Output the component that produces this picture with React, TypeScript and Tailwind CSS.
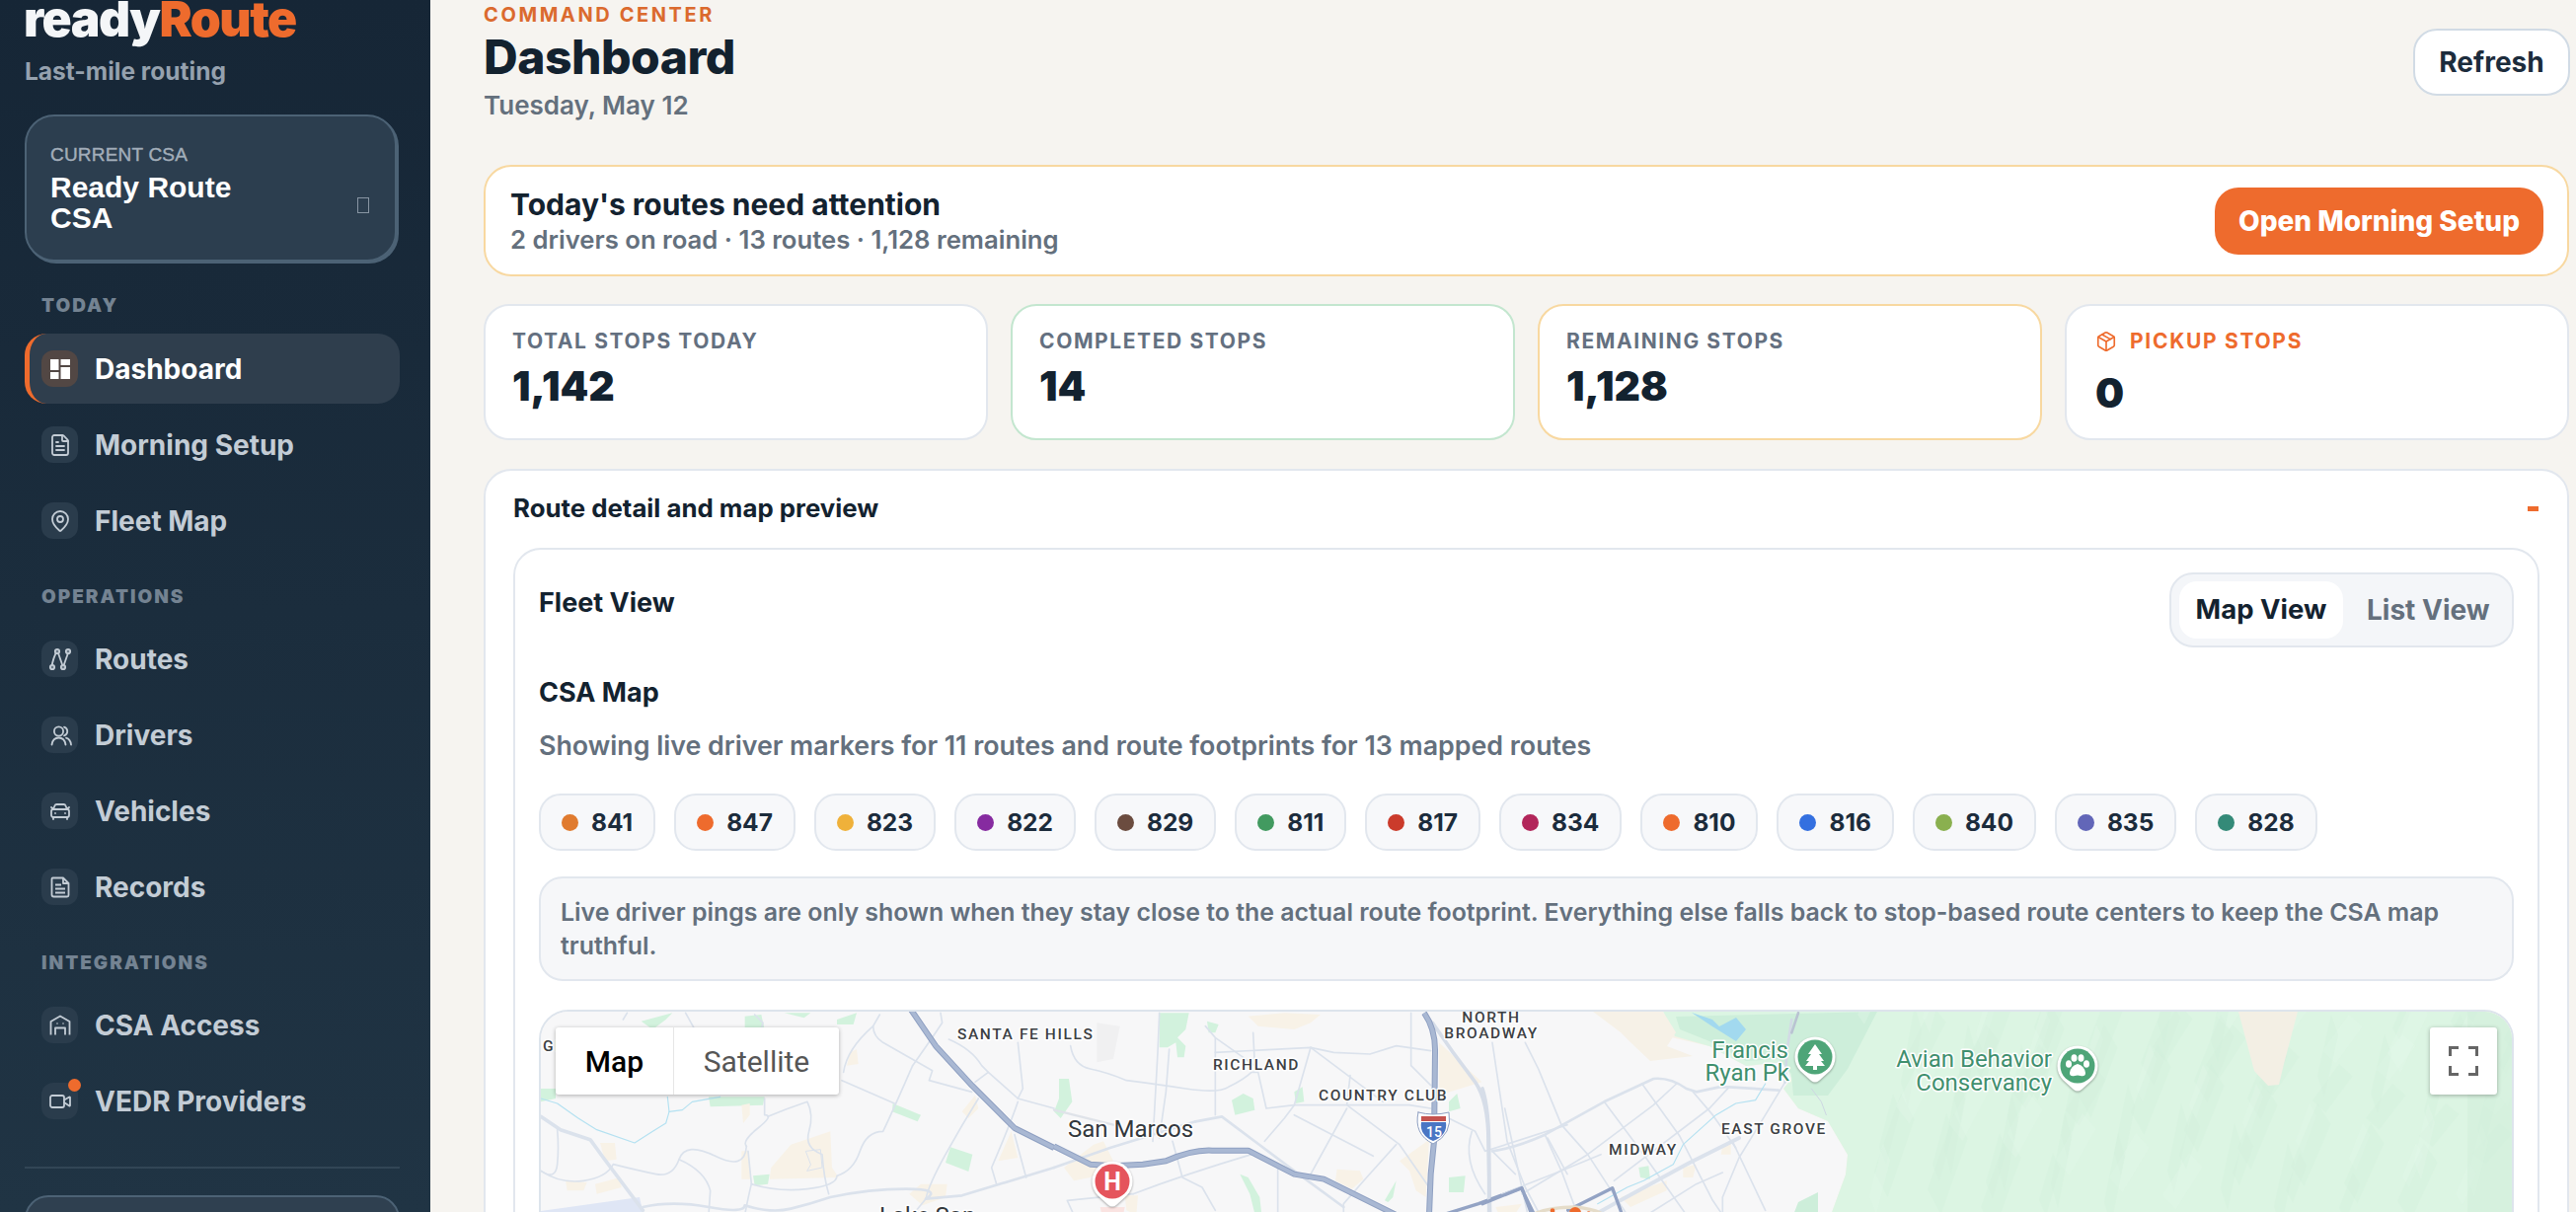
import React from 'react';
import { CarFront, FileText, MapPin, Package, Video } from 'lucide-react';

const RoutesIcon = () => (
  <svg viewBox="0 0 24 24" className="w-[24px] h-[24px]" fill="none" stroke="#c3ccd5" strokeWidth="1.8">
    <path d="M3 21 Q5 10 9 3 L15 20 Q18 11 21 3" />
    <circle cx="4" cy="20" r="2.2" fill="#6d7c8a" />
    <circle cx="9" cy="4" r="2.2" fill="#6d7c8a" />
    <circle cx="15" cy="20" r="2.2" fill="#6d7c8a" />
    <circle cx="20" cy="4" r="2.2" fill="#6d7c8a" />
  </svg>
);

const DriversIcon = () => (
  <svg viewBox="0 0 24 24" className="w-[24px] h-[24px] ml-[3px]" fill="none" stroke="#c3ccd5" strokeWidth="1.8" strokeLinecap="round">
    <circle cx="9.5" cy="8" r="4.6" />
    <path d="M15 3.6 A4.6 4.6 0 0 1 15 12.4" />
    <path d="M2.5 21.5 Q3.5 14.5 9.5 14.5 Q15.5 14.5 16.5 21.5" />
    <path d="M17 14.6 Q21.5 16 22 21.5" />
  </svg>
);

const RecordsIcon = () => (
  <svg viewBox="0 0 24 24" className="w-[24px] h-[24px]" fill="none" stroke="#c3ccd5" strokeWidth="1.8" strokeLinejoin="round">
    <path d="M4.5 2.5 H15 L20.5 8 V20 Q20.5 21.5 19 21.5 H5.5 Q3.5 21.5 3.5 19.5 V3.5 Q3.5 2.5 4.5 2.5 Z" />
    <path d="M15 2.5 V8 H20.5" />
    <path d="M7 9.5 H13 M7 13.5 H17 M7 17.5 H17" />
  </svg>
);

const AccessIcon = () => (
  <svg viewBox="0 0 24 24" className="w-[24px] h-[24px]" fill="none" stroke="#c3ccd5" strokeWidth="1.8" strokeLinejoin="round">
    <path d="M2.5 21.5 V8 L12 2.5 L21.5 8 V21.5" />
    <path d="M7 21.5 V14.5 H17 V21.5" />
    <path d="M9 9.5 V10.5 M15 9.5 V10.5" />
  </svg>
);

const DashIcon = () => (
  <svg viewBox="0 0 20 20" className="w-[20px] h-[20px]" fill="#ffffff">
    <rect x="0" y="0" width="8.5" height="11" />
    <rect x="10.5" y="0" width="9.5" height="6" />
    <rect x="10.5" y="8" width="9.5" height="12" />
    <rect x="0" y="13" width="8.5" height="7" />
  </svg>
);

const iconCls = 'w-[24px] h-[24px] text-[#c3ccd5]';

type NavItem = { label: string; icon: React.ReactNode; dot?: boolean };

const groups: { title: string; items: NavItem[] }[] = [
  {
    title: 'OPERATIONS',
    items: [
      { label: 'Routes', icon: <RoutesIcon /> },
      { label: 'Drivers', icon: <DriversIcon /> },
      { label: 'Vehicles', icon: <CarFront className={iconCls} strokeWidth={1.8} /> },
      { label: 'Records', icon: <RecordsIcon /> },
    ],
  },
  {
    title: 'INTEGRATIONS',
    items: [
      { label: 'CSA Access', icon: <AccessIcon /> },
      { label: 'VEDR Providers', icon: <Video className={iconCls} strokeWidth={1.8} />, dot: true },
    ],
  },
];

const NavRow = ({ item }: { item: NavItem }) => (
  <div className="h-[71px] mb-[6px] pl-[17px] flex items-center gap-[17px]">
    <div className="relative w-[37px] h-[37px] rounded-[12px] bg-[#2a3c4c] flex items-center justify-center">
      {item.icon}
      {item.dot && <span className="absolute -top-[4px] -right-[3px] w-[13px] h-[13px] rounded-full bg-[#ee6b2d]" />}
    </div>
    <span className="text-[28px] font-bold text-[#c3ccd5]">{item.label}</span>
  </div>
);

const Sidebar = () => (
  <aside className="w-[436px] shrink-0 h-full overflow-hidden bg-gradient-to-b from-[#162636] to-[#203444] pl-[25px] pr-[31px] font-['Inter',sans-serif]">
    <div className="-ml-[1px] text-[49.8px] leading-[39px] font-black tracking-[-1.5px] text-[#f4f6f8]">
      ready<span className="text-[#ee6b2d]">Route</span>
    </div>
    <div className="mt-[18px] text-[24.5px] leading-[30px] font-bold text-[#95a1ae]">Last-mile routing</div>
    <div className="mt-[29px] mr-[3px] h-[149px] rounded-[30px] border-2 border-[#4c6275] bg-[#2c3e4f] shadow-[2px_2px_0_#4c6275] pl-[24px] pr-[26px] pt-[28px] font-['Liberation_Sans',sans-serif]">
      <div className="text-[19px] leading-[22px] text-[#a3aeba] tracking-[0.2px] [-webkit-text-stroke:0.4px_#a3aeba]">CURRENT CSA</div>
      <div className="mt-[6px] flex items-center justify-between">
        <div className="w-[220px] text-[30px] leading-[31px] font-bold text-white">Ready Route CSA</div>
        <span className="w-[12px] h-[16px] border border-[#8895a3] mt-[6px]" />
      </div>
    </div>
    <div className="mt-[35px] ml-[17px] h-[20px] text-[19px] leading-[20px] font-black tracking-[2px] text-[#748392]">TODAY</div>
    <div className="mt-[18px] h-[71px] mb-[6px] rounded-[22px] border-l-[5px] border-[#ee6b2d] bg-[#2f3e4d] pl-[12px] flex items-center gap-[17px]">
      <div className="w-[37px] h-[37px] rounded-[12px] bg-[#524744] flex items-center justify-center">
        <DashIcon />
      </div>
      <span className="text-[28px] font-bold text-white">Dashboard</span>
    </div>
    <NavRow item={{ label: 'Morning Setup', icon: <FileText className={iconCls} strokeWidth={1.8} /> }} />
    <NavRow item={{ label: 'Fleet Map', icon: <MapPin className={iconCls} strokeWidth={1.8} /> }} />
    {groups.map((g) => (
      <div key={g.title}>
        <div className="mt-[32px] mb-[17px] ml-[17px] h-[20px] text-[19px] leading-[20px] font-black tracking-[2px] text-[#748392]">{g.title}</div>
        {g.items.map((item) => (
          <NavRow key={item.label} item={item} />
        ))}
      </div>
    ))}
    <div className="mt-[31px] border-t-2 border-[#324656]" />
    <div className="mt-[27px] h-[120px] rounded-[24px] border-2 border-[#4c6275] bg-[#2f4050]" />
  </aside>
);

const stats = [
  { label: 'TOTAL STOPS TODAY', value: '1,142', border: 'border-[#e2e7ee]' },
  { label: 'COMPLETED STOPS', value: '14', border: 'border-[#c3e6cf]' },
  { label: 'REMAINING STOPS', value: '1,128', border: 'border-[#f8d8a0]' },
];

const routes = [
  { id: '841', color: 'bg-[#e07b2f]' },
  { id: '847', color: 'bg-[#ee6b2d]' },
  { id: '823', color: 'bg-[#efb13a]' },
  { id: '822', color: 'bg-[#862ba0]' },
  { id: '829', color: 'bg-[#6b4c3f]' },
  { id: '811', color: 'bg-[#429a60]' },
  { id: '817', color: 'bg-[#cb3b2b]' },
  { id: '834', color: 'bg-[#b2265a]' },
  { id: '810', color: 'bg-[#ee6b2d]' },
  { id: '816', color: 'bg-[#3470e0]' },
  { id: '840', color: 'bg-[#8ab04f]' },
  { id: '835', color: 'bg-[#6266b8]' },
  { id: '828', color: 'bg-[#348a78]' },
];

// mottled hillside on the right of the map
const patches = Array.from({ length: 90 }, (_, i) => {
  const x = 1880 + ((i * 211) % 660);
  const y = 1025 + ((i * 97) % 200);
  const w = 14 + (i * 13) % 26;
  const h = 30 + (i * 17) % 50;
  return { d: `M${x} ${y} l${w} ${-h} l${w / 2} ${h / 3} l${-w} ${h} Z`, fill: i % 3 === 0 ? '#e6f9ea' : '#d2eedb' };
});

const MapSvg = () => (
  <svg viewBox="546 1022 2002 206" className="block w-[2002px] h-[206px]" fill="none" strokeLinecap="round" strokeLinejoin="round">
    <rect x="546" y="1022" width="2002" height="206" fill="#f7f7f8" />

    {/* left block */}
    <g transform="translate(546 1020) scale(0.33333)">
      <g fill="#d2f2dd">
        <path d="M305 35 L400 10 L380 30 L340 60 Z" />
        <path d="M1070 285 L1155 320 L1145 340 L1068 310 Z" />
        <path d="M1245 418 L1312 440 L1300 492 L1230 465 Z" />
        <path d="M645 505 L695 500 L690 530 L650 535 Z" />
        <path d="M0 240 L45 240 L45 270 L0 280 Z" />
        <path d="M510 265 L680 265 L675 290 L515 295 Z" />
        <path d="M620 20 L670 15 L680 60 L620 60 Z" />
        <path d="M900 30 L960 10 L950 45 L900 45 Z" />
        <path d="M740 10 L820 10 L800 25 Z" />
      </g>
      <g fill="#f8f2e7">
        <path d="M700 480 L760 410 L880 370 L885 480 L905 510 L695 515 Z" />
        <path d="M180 405 L225 405 L230 455 L195 460 Z" />
        <path d="M75 520 L140 525 L130 550 L80 550 Z" />
        <path d="M165 530 L240 510 L245 540 L170 560 Z" />
        <path d="M1120 560 L1155 530 L1235 530 L1230 570 L1160 595 Z" />
        <path d="M1390 460 L1430 370 L1450 450 Z" />
        <path d="M1280 310 L1320 260 L1330 300 L1300 330 Z" />
        <path d="M940 130 L960 120 L965 165 L930 170 Z" />
        <path d="M610 430 L630 430 L640 515 L610 515 Z" />
        <path d="M610 290 L635 285 L635 320 L615 345 Z" />
      </g>
      <path d="M0 624 L0 612 L300 570 L312 624 Z" fill="#dfe6f5" />
      <g stroke="#dbe2ec" strokeWidth="5">
        <path d="M50 365 Q55 420 50 470 T0 490" />
        <path d="M0 490 Q60 530 130 520 T220 470 Q300 490 350 500 T420 455 T530 445 T625 415" />
        <path d="M420 455 Q500 490 515 550 L510 624" />
        <path d="M625 415 Q610 400 660 360 T680 320 L680 270" />
        <path d="M690 325 Q750 300 810 280 Q830 320 815 370 T855 440 Q860 510 875 560" />
        <path d="M630 430 Q635 480 640 530 Q630 570 620 624" />
        <path d="M640 530 Q720 555 810 545 T900 505 Q950 490 970 430 T1040 370 Q1060 330 1130 170" />
        <path d="M915 215 L1075 285" />
        <path d="M920 190 Q930 120 1010 50 L1030 15" />
        <path d="M1010 50 Q1010 80 1040 100 L1190 185 L1180 215 L1310 250" />
        <path d="M1130 170 Q1180 100 1220 40 L1215 10" />
        <path d="M1240 90 Q1310 120 1340 170 L1360 190 L1450 270 L1560 300" />
        <path d="M1360 190 L1320 220" />
        <path d="M1450 270 L1465 240 L1450 100" />
        <path d="M1450 280 Q1430 340 1370 480 L1385 530" />
        <path d="M1440 380 L1475 510" />
        <path d="M1330 270 Q1280 350 1230 440 T1170 575 L1130 624" />
        <path d="M250 30 L262 10 M440 10 L465 55 M650 15 L675 40 L670 60" />
        <path d="M820 470 L805 430 L850 425 L855 480 L810 490 Z" strokeWidth="3" />
      </g>
      <path d="M310 600 Q400 580 510 600 T620 595 Q700 620 760 605 T880 570 Q1000 545 1110 545 T1170 575 L1280 565 L1560 480" stroke="#dbe2ec" strokeWidth="8" />
      <path d="M0 325 L60 365 L150 395 L190 450 L310 610" stroke="#dbe2ec" strokeWidth="11" />
      <g stroke="#b4e1f1" strokeWidth="3.5">
        <path d="M0 270 L50 285 Q110 330 170 365 L285 405 L340 370 L380 345 L390 310 L385 265" />
        <path d="M390 310 L430 305 L460 280 L545 265" />
      </g>
      <path d="M1125 0 L1200 110 L1310 230 L1440 360 L1560 420" stroke="#8fa0c2" strokeWidth="18" strokeLinecap="butt" />
      <path d="M1125 0 L1200 110 L1310 230 L1440 360 L1560 420" stroke="#a9b8d3" strokeWidth="12" strokeLinecap="butt" />
    </g>

    {/* middle block */}
    <g transform="translate(1066 1020) scale(0.33333)">
      <path d="M130 40 L200 50 L180 150 L130 160 Z" fill="#f0f0f1" />
      <g fill="#d2f2dd">
        <path d="M15 210 L45 210 L55 280 L20 330 L0 310 L15 270 Z" />
        <path d="M320 10 L410 10 L400 60 L375 85 L400 110 L395 145 L375 145 L370 100 L345 115 L320 115 Z" />
        <path d="M465 35 L500 45 L490 70 L470 70 Z" />
        <path d="M540 275 L575 255 L605 270 L610 305 L550 320 Z" />
        <path d="M730 250 L755 235 L760 280 L735 285 Z" />
        <path d="M1200 280 L1225 255 L1235 300 L1200 310 Z" />
        <path d="M1200 510 L1250 505 L1245 555 L1200 555 Z" />
        <path d="M565 500 L590 510 L625 570 L630 615 L610 620 L595 560 Z" />
        <path d="M1005 580 L1040 520 L1030 570 L1015 585 Z" />
      </g>
      <g fill="#f8f2e7">
        <path d="M30 480 L120 410 L150 400 L180 460 L110 510 L60 520 Z" />
        <path d="M860 485 L930 490 L940 515 L905 545 L855 520 Z" />
        <path d="M1050 460 L1140 395 L1130 570 L1100 550 L1080 490 Z" />
        <path d="M590 20 L700 10 L810 15 L780 40 L730 60 L620 50 Z" />
        <path d="M1170 100 L1300 220 L1170 260 Z" />
        <path d="M215 565 L255 565 L250 624 L220 610 Z" />
      </g>
      <path d="M140 600 L215 600 L210 624 L145 624 Z" fill="#fae3e1" />
      <g stroke="#dbe2ec" strokeWidth="5">
        <path d="M320 10 L315 130 L300 400" />
        <path d="M350 120 L340 250 L320 390" />
        <path d="M50 110 Q60 170 110 180 T220 215 Q300 225 400 240 T530 235 Q580 210 600 190 L620 190 L645 300 L730 290 L890 290 L1080 290 L1145 300" />
        <path d="M460 50 L490 85 L610 170 M490 85 L490 320" />
        <path d="M605 70 L610 170" />
        <path d="M490 130 L780 115 L1000 280" />
        <path d="M780 115 L850 130 L960 135 L1040 110 L1145 125" />
        <path d="M780 115 Q750 220 730 290 L700 330 L640 400" />
        <path d="M900 200 L890 290 L1050 410 L1140 540" />
        <path d="M730 320 L970 445" />
        <path d="M890 300 L780 500" />
        <path d="M1180 320 L1280 370 L1310 430 L1560 350" />
        <path d="M1370 300 L1440 624 M1500 390 L1560 500" />
        <path d="M240 560 Q400 500 600 440" />
        <path d="M40 580 L240 560 M40 580 L60 624" />
        <path d="M360 400 L390 510 L450 540 L490 610" />
        <path d="M680 480 L680 620" />
        <path d="M1040 410 L950 510 L880 590 L880 624" />
        <path d="M1270 370 Q1240 460 1310 560" />
        <path d="M1085 10 L1085 170 L1145 230" />
      </g>
      <path d="M0 305 L180 350" stroke="#dfe3e9" strokeWidth="7" />
      <path d="M430 340 L510 325 L730 490 L880 600" stroke="#dbe2ec" strokeWidth="8" />
      <path d="M0 480 L170 420 L430 340" stroke="#dbe2ec" strokeWidth="8" />
      <path d="M1150 40 Q1210 130 1280 220 Q1320 280 1320 400 L1325 624" stroke="#d6dde8" strokeWidth="11" />
      <path d="M1125 10 Q1160 60 1158 130 L1155 400 L1145 500 L1140 624" stroke="#8fa0c2" strokeWidth="18" strokeLinecap="butt" />
      <path d="M1125 10 Q1160 60 1158 130 L1155 400 L1145 500 L1140 624" stroke="#a9b8d3" strokeWidth="12" strokeLinecap="butt" />
      <path d="M0 415 L110 470 L180 475 L270 470 L340 460 Q420 425 480 428 L590 428 L730 500 L820 515 L1040 624" stroke="#8fa0c2" strokeWidth="18" strokeLinecap="butt" />
      <path d="M0 415 L110 470 L180 475 L270 470 L340 460 Q420 425 480 428 L590 428 L730 500 L820 515 L1040 624" stroke="#a9b8d3" strokeWidth="12" strokeLinecap="butt" />
      <path d="M1180 624 L1290 590 L1420 542 L1460 624" stroke="#93a3c4" strokeWidth="10" />
    </g>

    {/* right block: hills, park, east side streets */}
    <path d="M1690 1022 L2548 1022 L2548 1228 L1853 1228 L1868 1187 L1870 1167 L1850 1133 L1820 1120 L1805 1100 L1813 1090 L1807 1073 L1767 1077 L1730 1057 L1687 1047 Z" fill="#f6f1e7" />
    <path d="M1683 1022 L2548 1022 L2548 1228 L1853 1228 L1868 1187 L1870 1167 L1850 1133 L1820 1120 L1805 1100 L1813 1090 L1807 1073 L1767 1077 L1730 1057 L1695 1047 Z" fill="#dcf5e3" />
    <path d="M1696 1027 L1900 1022 L1870 1080 L1850 1107 L1815 1107 L1813 1085 L1800 1070 L1767 1072 L1730 1052 L1700 1040 Z" fill="#cdeeda" />
    {patches.map((p, i) => (
      <path key={i} d={p.d} fill={p.fill} opacity="0.3" />
    ))}
    <path d="M2266 1022 L2326 1022 L2312 1075 L2307 1096 L2296 1097 L2282 1082 Z" fill="#f3efe4" />
    <rect x="2498" y="1022" width="50" height="206" fill="#cfeeda" opacity="0.5" />
    <path d="M1612 1022 L1683 1022 L1696 1043 L1687 1057 L1713 1067 L1670 1072 L1650 1053 L1640 1043 Z" fill="#f6f1e7" />
    <path d="M1712 1023 L1733 1030 L1740 1037 L1757 1028 L1767 1040 L1757 1052 L1733 1037 Z" fill="#a2d9ef" />
    <path d="M1820 1215 L1840 1205 L1840 1228 L1815 1228 Z" fill="#cdeeda" />
    <g transform="translate(1500 1020) scale(0.33333)">
      <g fill="#f8f2e7">
        <path d="M730 410 L755 405 L755 440 L725 440 Z" />
        <path d="M610 480 L650 470 L640 510 L610 510 Z" />
        <path d="M420 570 L560 520 L560 550 L450 600 Z" />
        <path d="M40 600 L120 590 L100 620 L50 624 Z" />
      </g>
      <path d="M475 480 L505 475 L510 515 L480 510 Z" fill="#d2f2dd" />
      <g stroke="#dbe2ec" strokeWidth="5">
        <path d="M30 100 L75 400 L130 540 L175 624" />
        <path d="M130 100 L170 180 L240 350 L320 440 L440 624" />
        <path d="M190 380 L240 490 L290 624" />
        <path d="M370 280 L490 440 L620 624" />
        <path d="M485 225 L600 385 L700 580 L730 624" />
        <path d="M590 225 L520 290 L320 440 L120 560" />
        <path d="M750 235 L690 300 L400 520" />
        <path d="M640 250 L700 320 L770 420" />
        <path d="M760 400 L860 610" />
        <path d="M920 220 L860 320 L780 450 L730 570 L730 624" />
        <path d="M30 430 L100 500 M60 560 L240 490 L360 440" />
        <path d="M500 624 L650 530 L730 495" />
      </g>
      <path d="M0 240 Q20 300 20 430 L20 624" stroke="#d6dde8" strokeWidth="11" />
      <path d="M30 430 Q100 420 190 380 L370 280 L520 210 Q570 205 620 240 L650 250 L720 235 L750 235 L900 245" stroke="#dbe2ec" strokeWidth="8" />
      <path d="M780 390 L630 465 L400 590 L340 624" stroke="#dbe2ec" strokeWidth="12" />
      <path d="M940 30 L925 130 L920 220" stroke="#d2dae5" strokeWidth="8" />
      <path d="M960 10 L940 70" stroke="#b9c3d2" strokeWidth="8" />
      <path d="M1000 240 L1030 280 L1045 320" stroke="#cdd6e2" strokeWidth="3" />
      <path d="M860 225 L830 275 L770 285 L710 320 L610 410 L580 470 L490 520 L440 540 L350 590" stroke="#b4e1f1" strokeWidth="3.5" />
      <path d="M0 590 L120 542 L150 624" stroke="#93a3c4" strokeWidth="10" />
      <path d="M260 610 L395 542 L425 624" stroke="#93a3c4" strokeWidth="10" />
      <path d="M150 624 Q200 600 280 600 Q340 605 370 624" stroke="#e5dcc9" strokeWidth="10" />
      <g fill="#ee6b2d">
        <circle cx="213" cy="611" r="7" />
        <circle cx="282" cy="618" r="18" />
        <circle cx="323" cy="620" r="7" />
      </g>
    </g>

    {/* pins */}
    <g transform="translate(1125 1194)" className="drop-shadow-[0_1px_1px_rgba(0,0,0,0.35)]">
      <path d="M-15 14 A20.5 20.5 0 1 1 15 14 L4 24 Q0 27 -4 24 Z" fill="#ffffff" />
      <circle r="17.5" fill="#e5545c" />
    </g>
    <text x="1125" y="1203" textAnchor="middle" fontFamily="Roboto, sans-serif" fontWeight="700" fontSize="25" fill="#ffffff">H</text>
    <g transform="translate(1837 1068)" className="drop-shadow-[0_1px_1px_rgba(0,0,0,0.35)]">
      <path d="M-15 14 A20.5 20.5 0 1 1 15 14 L4 24 Q0 27 -4 24 Z" fill="#ffffff" />
      <circle r="17.5" fill="#4ea578" />
      <path d="M0 -13 L7 -3 L4 -3 L9 4 L6 4 L10 9 L2 9 L2 13 L-2 13 L-2 9 L-10 9 L-6 4 L-9 4 L-4 -3 L-7 -3 Z" fill="#ffffff" />
    </g>
    <g transform="translate(2103 1077)" className="drop-shadow-[0_1px_1px_rgba(0,0,0,0.35)]">
      <path d="M-15 14 A20.5 20.5 0 1 1 15 14 L4 24 Q0 27 -4 24 Z" fill="#ffffff" />
      <circle r="17.5" fill="#4ea578" />
      <g fill="#ffffff">
        <ellipse cx="-9" cy="-2" rx="3" ry="3.8" />
        <ellipse cx="-3.5" cy="-8" rx="3" ry="3.8" />
        <ellipse cx="3.5" cy="-8" rx="3" ry="3.8" />
        <ellipse cx="9" cy="-2" rx="3" ry="3.8" />
        <path d="M0 -2 Q7 0 8 7 Q8 11 3 10 L0 9.5 L-3 10 Q-8 11 -8 7 Q-7 0 0 -2 Z" />
      </g>
    </g>
    {/* I-15 shield */}
    <path d="M1435 1124 Q1450 1128 1466 1124 Q1470 1146 1450 1156 Q1430 1146 1435 1124 Z" fill="#ffffff" stroke="#8fa0c2" strokeWidth="1" />
    <path d="M1438 1128 L1463 1128 L1463 1133 L1438 1133 Z" fill="#c5534f" />
    <path d="M1438 1134 L1463 1134 Q1465 1147 1450 1153 Q1436 1147 1438 1134 Z" fill="#4a76c4" />
    <text x="1451" y="1149" textAnchor="middle" fontFamily="Roboto, sans-serif" fontWeight="500" fontSize="14" fill="#ffffff">15</text>

    {/* labels */}
    <g fontFamily="Roboto, sans-serif" fontWeight="500" fontSize="15.5" letterSpacing="1.6" fill="#3c4043" stroke="#ffffff" strokeWidth="3" style={{ paintOrder: 'stroke' }}>
      <text x="968" y="1050">SANTA FE HILLS</text>
      <text x="1227" y="1081">RICHLAND</text>
      <text x="1509" y="1033" textAnchor="middle">NORTH</text>
      <text x="1509" y="1049" textAnchor="middle">BROADWAY</text>
      <text x="1334" y="1112">COUNTRY CLUB</text>
      <text x="1628" y="1167">MIDWAY</text>
      <text x="1742" y="1146">EAST GROVE</text>
      <text x="548" y="1062">GE</text>
    </g>
    <g fontFamily="Roboto, sans-serif" fontSize="24" fill="#33383d" stroke="#ffffff" strokeWidth="3" style={{ paintOrder: 'stroke' }}>
      <text x="1080" y="1149">San Marcos</text>
      <text x="889" y="1237">Lake San</text>
    </g>
    <g fontFamily="Roboto, sans-serif" fontSize="24" fill="#3f8f6e" stroke="#ffffff" strokeWidth="3" textAnchor="end" style={{ paintOrder: 'stroke' }}>
      <text x="1810" y="1069">Francis</text>
      <text x="1811" y="1092">Ryan Pk</text>
      <text x="2077" y="1078">Avian Behavior</text>
      <text x="2077" y="1102">Conservancy</text>
    </g>
  </svg>
);

const MapCard = () => (
  <div className="relative mt-[29px] h-[400px] rounded-[30px] border-2 border-[#dde4ec] overflow-hidden bg-[#f7f7f8] font-['Roboto',sans-serif]">
    <MapSvg />
    <div className="absolute left-[15px] top-[16px] flex h-[68px] rounded-[3px] bg-white shadow-[0_1px_4px_rgba(0,0,0,0.3)]">
      <div className="w-[120px] flex items-center justify-center text-[30px] font-medium text-black border-r border-[#e6e6e6]">Map</div>
      <div className="w-[167px] flex items-center justify-center text-[30px] text-[#565656]">Satellite</div>
    </div>
    <div className="absolute left-[1914px] top-[16px] w-[68px] h-[68px] rounded-[3px] bg-white shadow-[0_1px_4px_rgba(0,0,0,0.3)] flex items-center justify-center">
      <svg viewBox="0 0 30 30" className="w-[30px] h-[30px]" fill="none" stroke="#666666" strokeWidth="3">
        <path d="M1.5 10 V1.5 H10 M20 1.5 H28.5 V10 M28.5 20 V28.5 H20 M10 28.5 H1.5 V20" />
      </svg>
    </div>
  </div>
);

const Main = () => (
  <main className="flex-1 h-full overflow-hidden bg-[#f6f4f0] pl-[54px] pr-[7px] font-['Inter',sans-serif]">
    <div className="h-[139px] flex justify-between">
      <div>
        <div className="mt-[4px] text-[20px] leading-[22px] font-bold tracking-[2.6px] text-[#db6a2e]">COMMAND CENTER</div>
        <h1 className="mt-[5px] text-[48px] leading-[54px] font-extrabold tracking-[-0.5px] text-[#13222f]">Dashboard</h1>
        <div className="mt-[7px] text-[26px] leading-[30px] font-semibold text-[#64707d]">Tuesday, May 12</div>
      </div>
      <button type="button" className="mt-[29px] -mr-[1px] h-[68px] w-[159px] rounded-[24px] border-2 border-[#d1dbe5] bg-white text-[28px] font-bold text-[#1c2c3c]">
        Refresh
      </button>
    </div>
    <div className="mt-[28px] h-[113px] rounded-[28px] border-2 border-[#f8d8a0] bg-white pl-[25px] pr-[24px] flex items-center justify-between">
      <div>
        <div className="text-[30px] leading-[34px] font-bold text-[#13222f]">Today's routes need attention</div>
        <div className="mt-[4px] text-[25.7px] leading-[30px] font-semibold text-[#64707d]">2 drivers on road · 13 routes · 1,128 remaining</div>
      </div>
      <button type="button" className="h-[68px] w-[333px] rounded-[24px] bg-[#ee6b2d] text-[28px] font-extrabold text-white">Open Morning Setup</button>
    </div>
    <div className="mt-[28px] grid grid-cols-4 gap-[23px] h-[138px]">
      {stats.map((s) => (
        <div key={s.label} className={`rounded-[26px] border-2 ${s.border} bg-white pl-[27px] pt-[23px]`}>
          <div className="text-[21px] leading-[26px] font-bold tracking-[1.6px] text-[#647080]">{s.label}</div>
          <div className="mt-[8px] text-[41px] leading-[48px] font-black text-[#13222f]">{s.value}</div>
        </div>
      ))}
      <div className="rounded-[26px] border-2 border-[#e2e7ee] bg-white pl-[29px] pt-[23px]">
        <div className="flex items-center gap-[13px] h-[26px]">
          <Package className="w-[22px] h-[22px] text-[#ee6b2d]" strokeWidth={1.8} />
          <span className="text-[21px] leading-[26px] font-bold tracking-[1.7px] text-[#ee6b2d]">PICKUP STOPS</span>
        </div>
        <div className="mt-[15px] text-[41px] leading-[48px] font-black text-[#13222f]">0</div>
      </div>
    </div>
    <section className="mt-[29px] rounded-[28px] border-2 border-[#e2e7ee] bg-white px-[28px] h-[900px]">
      <div className="h-[78px] pb-[2px] flex items-center justify-between">
        <span className="text-[25.8px] font-bold text-[#13222f]">Route detail and map preview</span>
        <span className="w-[11px] h-[5px] bg-[#ee6b2d] mr-[1px]" />
      </div>
      <div className="rounded-[28px] border-2 border-[#e2e7ee] px-[24px] pt-[23px]">
        <div className="flex justify-between items-start h-[76px]">
          <div className="mt-[15px] text-[27px] leading-[32px] font-bold text-[#13222f]">Fleet View</div>
          <div className="w-[349px] h-[76px] rounded-[24px] border-2 border-[#e2e7ee] bg-[#f4f6f9] pl-[8px] pt-[7px] flex">
            <div className="w-[166px] h-[58px] rounded-[18px] bg-white flex items-center justify-center text-[27.5px] font-bold text-[#13222f]">Map View</div>
            <div className="ml-[24px] h-[58px] flex items-center text-[28px] font-bold text-[#64707d]">List View</div>
          </div>
        </div>
        <div className="mt-[30px] text-[27px] leading-[32px] font-bold text-[#13222f]">CSA Map</div>
        <div className="mt-[21px] text-[26.8px] leading-[32px] font-semibold text-[#64707d]">Showing live driver markers for 11 routes and route footprints for 13 mapped routes</div>
        <div className="mt-[33px] flex gap-[19px]">
          {routes.map((r) => (
            <div key={r.id} className="h-[58px] px-[21px] rounded-[22px] border-2 border-[#e2e7ee] bg-[#f7f8fa] flex items-center gap-[13px]">
              <span className={`w-[17px] h-[17px] rounded-full ${r.color}`} />
              <span className="text-[24.5px] font-bold text-[#1c2c3c]">{r.id}</span>
            </div>
          ))}
        </div>
        <div className="mt-[26px] h-[106px] rounded-[24px] border-2 border-[#e2e7ee] bg-[#f6f7f9] px-[20px] pt-[17px] text-[24.9px] leading-[34px] font-semibold text-[#64707d]">
          Live driver pings are only shown when they stay close to the actual route footprint. Everything else falls back to stop-based route centers to keep the CSA map truthful.
        </div>
        <MapCard />
      </div>
    </section>
  </main>
);

export default function App() {
  return (
    <div className="flex w-[2610px] h-[1228px] overflow-hidden">
      <Sidebar />
      <Main />
    </div>
  );
}
